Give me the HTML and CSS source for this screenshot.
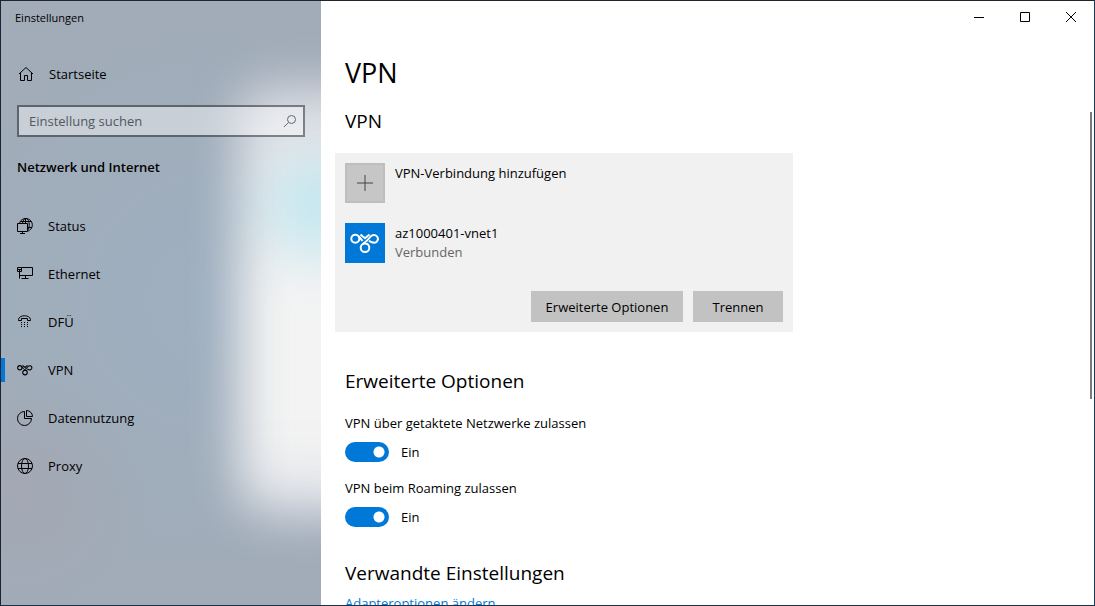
FILE: index.html
```html
<!DOCTYPE html>
<html lang="de">
<head>
<meta charset="utf-8">
<meta name="viewport" content="width=device-width, initial-scale=1">
<title>Einstellungen</title>
<link rel="stylesheet" href="styles.css">
</head>
<body>
<svg class="defs" aria-hidden="true">
  <symbol id="vpn-loops" viewBox="0 0 30 22">
    <circle cx="5.300" cy="6.800" r="4"/>
    <path d="M8.500 4.300C10 5.500 11 7 12.500 9M19 8.800c1.500 1.200 3.500 2 5.700 2a4 4 0 1 0-4-6.300C18 8 15.500 10 12.500 12.300M10.500 2.500l4.500 3.800 4.500-3.800M18 12.600 16.700 11.200"/>
    <circle cx="15" cy="15.800" r="4.300"/>
  </symbol>
</svg>
<div class="window">
  <aside class="sidebar">
    <div class="backdrop" aria-hidden="true"></div>
    <div class="title">Einstellungen</div>
    <a class="nav-item home" href="#">
      <svg class="icon" viewBox="0 0 16 16"><path d="M1 8 8 1.500 15 8M2.500 7v7.500h4v-5h3v5h4V7"/></svg>
      <span>Startseite</span>
    </a>
    <form class="search">
      <input type="search" placeholder="Einstellung suchen" aria-label="Einstellung suchen">
      <svg class="search-icon" viewBox="0 0 14 14"><circle cx="8.500" cy="5.500" r="4"/><path d="M5.500 8.500 1 13"/></svg>
    </form>
    <h2 class="section">Netzwerk und Internet</h2>
    <nav class="nav">
      <a class="nav-item" href="#">
        <svg class="icon" viewBox="0 0 16 16"><path d="M2.500 5.500a6.500 6.500 0 1 1 8.500 7.600M3 3.500h11.500M10.500 9.500h4.500M5.500 5.500C6 2.500 7 .5 8.800.5c2.500 0 4 4.500 3.200 8.500-.3 1.500-.6 2.500-1.500 3.500M8.500.5v5"/><path d="M.5 5.500h10v8H.5zM5.500 13.500v2M3 15.500h5"/></svg>
        <span>Status</span>
      </a>
      <a class="nav-item" href="#">
        <svg class="icon" viewBox="0 0 16 16"><path d="M.5 1.500h4v4h-4zM.5 3.500h4M2.500 3.500v2M2.500 5.500v7M4.500 1.500h11v8h-13M8.500 9.500v3M4.500 12.500h7"/></svg>
        <span>Ethernet</span>
      </a>
      <a class="nav-item" href="#">
        <svg class="icon" viewBox="0 0 16 16"><path d="M1.500 5.500C2 .5 13 .5 13.500 5.500v1h-3v-2h-6v2h-3z"/><path class="dots" d="M4 8h1v1H4zM7 8h1v1H7zM10 8h1v1h-1zM4 10h1v1H4zM7 10h1v1H7zM10 10h1v1h-1zM4 12h1v1H4zM7 12h1v1H7zM10 12h1v1h-1z"/></svg>
        <span>DFÜ</span>
      </a>
      <a class="nav-item current" href="#" aria-current="page">
        <svg class="icon loops"><use href="#vpn-loops"/></svg>
        <span>VPN</span>
      </a>
      <a class="nav-item" href="#">
        <svg class="icon" viewBox="0 0 16 16"><path d="M7.500 1.500A7 7 0 1 0 14.500 8.500h-7z"/><path d="M9.500.5v6h6a6 6 0 0 0-6-6z"/></svg>
        <span>Datennutzung</span>
      </a>
      <a class="nav-item" href="#">
        <svg class="icon" viewBox="0 0 16 16"><circle cx="8" cy="8" r="7.500"/><ellipse cx="8" cy="8" rx="3.500" ry="7.500"/><path d="M1 5.500h14M1 10.500h14"/></svg>
        <span>Proxy</span>
      </a>
    </nav>
  </aside>
  <div class="pane">
    <div class="controls">
      <button type="button" aria-label="Minimieren"><svg viewBox="0 0 10 10"><path d="M0 5.500h10"/></svg></button>
      <button type="button" aria-label="Maximieren"><svg viewBox="0 0 10 10"><path d="M.5.500h9v9h-9z"/></svg></button>
      <button type="button" aria-label="Schließen"><svg viewBox="0 0 10 10"><path d="M0 0l10 10M10 0 0 10"/></svg></button>
    </div>
    <main class="content">
      <h1>VPN</h1>
      <h2>VPN</h2>
      <section class="card">
        <button type="button" class="entry">
          <span class="tile add"><svg viewBox="0 0 16 16"><path d="M8 0v16M0 8h16"/></svg></span>
          <span class="entry-text">VPN-Verbindung hinzufügen</span>
        </button>
        <div class="entry">
          <span class="tile vpn"><svg><use href="#vpn-loops"/></svg></span>
          <span class="entry-text">az1000401-vnet1<small>Verbunden</small></span>
        </div>
        <div class="actions">
          <button type="button" class="wide">Erweiterte Optionen</button>
          <button type="button">Trennen</button>
        </div>
      </section>
      <h2>Erweiterte Optionen</h2>
      <div class="setting">
        <label for="metered">VPN über getaktete Netzwerke zulassen</label>
        <div class="switch"><input type="checkbox" role="switch" id="metered" checked><span>Ein</span></div>
      </div>
      <div class="setting">
        <label for="roaming">VPN beim Roaming zulassen</label>
        <div class="switch"><input type="checkbox" role="switch" id="roaming" checked><span>Ein</span></div>
      </div>
      <h2 class="related">Verwandte Einstellungen</h2>
      <a class="link" href="#">Adapteroptionen ändern</a>
    </main>
    <div class="scroll-thumb" aria-hidden="true"></div>
  </div>
</div>
</body>
</html>
```
FILE: styles.css
```css
* { box-sizing: border-box; }

body {
  margin: 0;
  color: #000;
  font: 13px/20px "Open Sans", "Noto Sans", sans-serif;
}

h1, h2 { margin: 0; font-weight: 400; }
a { color: inherit; text-decoration: none; }
button { padding: 0; border: 0; background: none; color: inherit; font: inherit; }
svg { fill: none; stroke: currentColor; }
.defs { position: absolute; width: 0; height: 0; }

.window {
  display: grid;
  grid-template-columns: 320px 1fr;
  height: 100vh;
  border: 1px solid;
  border-color: #20242f #1a3a56 #1a3047 #1b2233;
  overflow: hidden;
  background: #fff;
}

/* Sidebar */
.sidebar {
  position: relative;
  isolation: isolate;
  overflow: hidden;
  background:
    radial-gradient(circle at 20px 490px, #a3a8b4 0, transparent 130px),
    radial-gradient(circle at 210px 300px, #9eafc0 0, transparent 280px),
    #a1acb8;
}

.backdrop {
  position: absolute;
  z-index: -1;
  inset: 84px -80px 90px 238px;
  border-radius: 30px;
  background:
    radial-gradient(circle at 78px 122px, #bce6f0 10px, transparent 75px),
    linear-gradient(#d4d6de, #e9eaed 80px, #f3f3f3 200px, #f3f3f3 360px, #dcdee6);
  filter: blur(24px);
}

.title {
  height: 49px;
  padding: 7px 14px;
  font-size: 11px;
}

.nav-item {
  display: flex;
  align-items: center;
  gap: 15px;
  height: 48px;
  padding: 0 16px;
}
.nav-item.home { padding-left: 17px; }
.nav-item.current { background: linear-gradient(#0078d7, #0078d7) left center / 4px 24px no-repeat; }
.icon { width: 16px; height: 16px; }
.icon.loops { height: 12px; stroke-width: 2; }
.dots { fill: currentColor; stroke: none; }

.search {
  display: flex;
  align-items: center;
  height: 32px;
  margin: 7px 16px 0;
  padding-right: 6px;
  border: 2px solid rgb(0 0 0 / 42%);
  background: rgb(255 255 255 / 42%);
  background-clip: padding-box;
}
.search input {
  flex: 1;
  min-width: 0;
  padding: 0 10px;
  border: 0;
  outline: 0;
  background: none;
  font: inherit;
}
.search input::placeholder { color: #53585f; opacity: 1; }
.search-icon { width: 14px; height: 14px; color: #666; }

.section {
  margin: 20px 16px 25px;
  font-size: 13px;
  line-height: 20px;
  font-weight: 600;
}

/* Content pane */
.pane { position: relative; min-width: 0; overflow: hidden; }

.controls { display: flex; justify-content: flex-end; }
.controls button {
  display: grid;
  place-items: center;
  width: 46px;
  height: 32px;
}
.controls svg { width: 10px; height: 10px; }

.content { padding: 20px 24px; }
.content h1 { font-size: 27px; line-height: 40px; }
.content h2 { margin: 14px 0 18px; font-size: 19px; line-height: 28px; }

.card {
  display: grid;
  gap: 20px;
  max-width: 458px;
  margin: 0 -10px 35px;
  padding: 10px;
  background: #f1f1f1;
}
.entry { display: flex; gap: 10px; text-align: left; }
.entry-text { line-height: 20px; }
.entry small { display: block; color: #666; font-size: 13px; line-height: 18px; }

.tile { display: grid; place-items: center; width: 40px; height: 40px; }
.tile.add { border: 2px solid #bebebe; background: #c6c6c6; color: #444; }
.tile.add svg { width: 16px; height: 16px; }
.tile.vpn { background: #0078d7; color: #fff; }
.tile.vpn svg { width: 30px; height: 22px; stroke-width: 2; }

.actions { display: flex; justify-content: flex-end; gap: 10px; margin-top: 8px; }
.actions button { min-width: 90px; height: 31px; background: #c2c2c2; }
.actions .wide { min-width: 152px; }

.setting { margin-bottom: 16px; }
.setting label { display: block; }
.switch { display: flex; align-items: center; gap: 12px; height: 20px; margin-top: 9px; }
.switch input {
  appearance: none;
  width: 44px;
  height: 20px;
  margin: 0;
  border-radius: 10px;
  background: radial-gradient(circle at 34px 10px, #fff 5px, transparent 6px) #0078d7;
}

.content .related { margin: 32px 0 6px; }
.link { color: #0078d7; }

.scroll-thumb {
  position: absolute;
  top: 111px;
  right: 2px;
  width: 2px;
  height: 47.5%;
  background: #7a7a7a;
}
```
